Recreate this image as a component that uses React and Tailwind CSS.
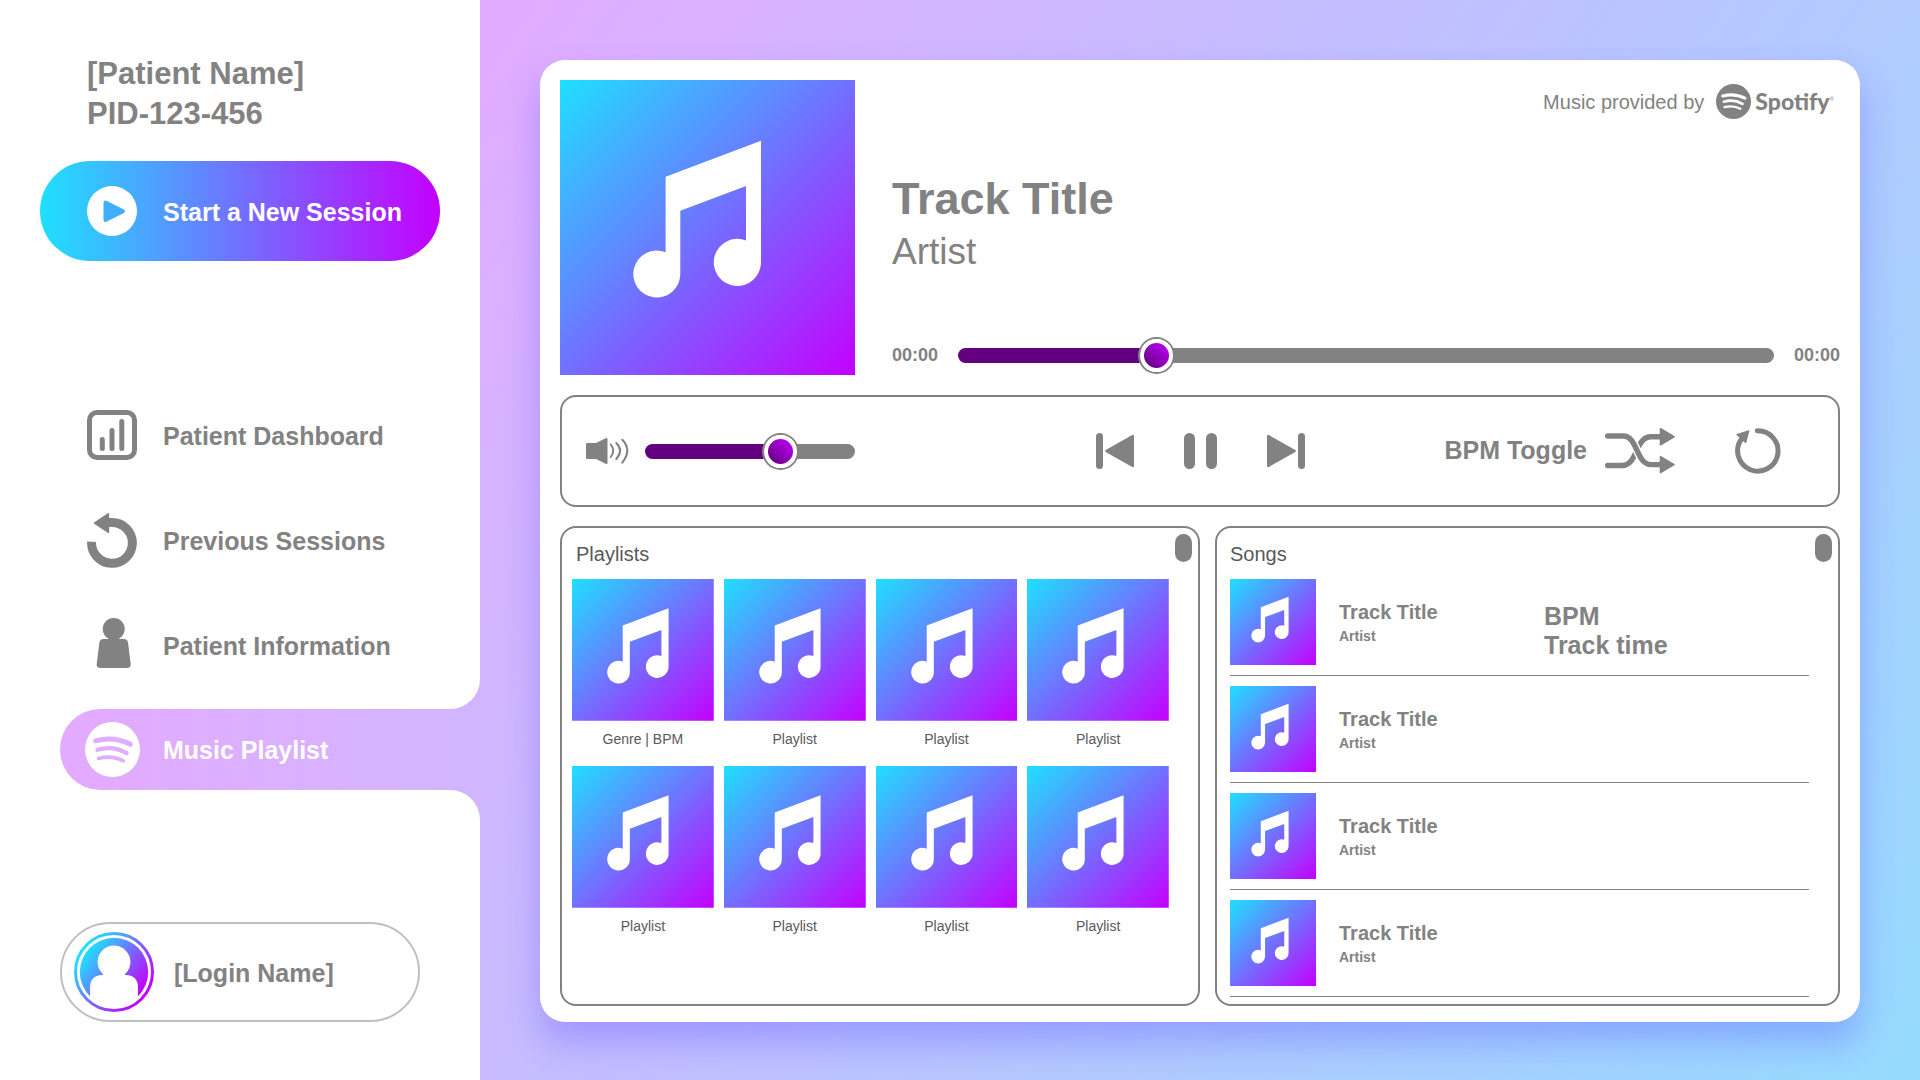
import { useState } from 'react';

const NAV_ITEMS = [
  { label: 'Patient Dashboard', href: '#dashboard', Icon: DashboardIcon },
  { label: 'Previous Sessions', href: '#sessions', Icon: HistoryIcon },
  { label: 'Patient Information', href: '#information', Icon: PersonIcon },
];

const PLAYLISTS = [
  { id: 1, name: 'Genre | BPM' },
  { id: 2, name: 'Playlist' },
  { id: 3, name: 'Playlist' },
  { id: 4, name: 'Playlist' },
  { id: 5, name: 'Playlist' },
  { id: 6, name: 'Playlist' },
  { id: 7, name: 'Playlist' },
  { id: 8, name: 'Playlist' },
];

const SONGS = [
  { id: 1, title: 'Track Title', artist: 'Artist', bpm: 'BPM', time: 'Track time' },
  { id: 2, title: 'Track Title', artist: 'Artist' },
  { id: 3, title: 'Track Title', artist: 'Artist' },
  { id: 4, title: 'Track Title', artist: 'Artist' },
];

function PlayIcon() {
  return (
    <svg className="h-[50px] w-[50px] shrink-0" viewBox="0 0 50 50">
      <circle cx="25" cy="25" r="25" fill="#fff" />
      <path
        d="M18.5 16.5v17.5l17.5-8.8z"
        fill="#42aefe"
        stroke="#42aefe"
        strokeWidth="4"
        strokeLinejoin="round"
      />
    </svg>
  );
}

function DashboardIcon() {
  return (
    <svg
      className="h-14 w-[50px] shrink-0"
      viewBox="0 0 50 56"
      fill="none"
      stroke="currentColor"
      strokeWidth="5"
      strokeLinecap="round"
    >
      <rect x="2.5" y="4.5" width="45" height="45" rx="7.5" />
      <path d="M15.3 31.5v9M25 22.5v18M34.8 13.5v27" />
    </svg>
  );
}

function HistoryIcon() {
  return (
    <svg className="h-14 w-[50px] shrink-0" viewBox="0 0 50 56">
      <path
        d="M4.6 28.8A20.4 20.4 0 1 0 25 9.5h-4"
        fill="none"
        stroke="currentColor"
        strokeWidth="9"
      />
      <path
        d="M7.5 10.1 21.5.7v18.8z"
        fill="currentColor"
        stroke="currentColor"
        strokeWidth="1.4"
        strokeLinejoin="round"
      />
    </svg>
  );
}

function PersonIcon() {
  return (
    <svg className="h-14 w-[50px] shrink-0" viewBox="0 0 50 56" fill="currentColor">
      <circle cx="26.7" cy="11" r="11" />
      <path d="M16.5 21h20.5q3.6 0 4 3.6l2.7 21.4q.3 4-3.7 4H13.5q-4.2 0-3.8-4l2.7-21.4q.4-3.6 4.1-3.6z" />
    </svg>
  );
}

function SpotifyIcon({ className, lineColor }) {
  return (
    <svg className={className} viewBox="0 0 55 55" fill="none" strokeLinecap="round">
      <circle cx="27.5" cy="27.5" r="27.5" fill="currentColor" />
      <path d="M10.6 18.8Q29 14 45.3 22.3" stroke={lineColor} strokeWidth="5" />
      <path d="M12.5 27.8Q28 23.2 41.6 31.2" stroke={lineColor} strokeWidth="4.3" />
      <path d="M13.5 36.4Q27 33 38.3 38.9" stroke={lineColor} strokeWidth="3.6" />
    </svg>
  );
}

function AvatarIcon() {
  return (
    <svg className="h-20 w-20 shrink-0" viewBox="0 0 80 80">
      <defs>
        <linearGradient id="avatar-fill" x1="0.1" y1="0.2" x2="0.9" y2="0.8">
          <stop offset="0" stopColor="#1fe0ff" />
          <stop offset="1" stopColor="#c400ff" />
        </linearGradient>
        <clipPath id="avatar-clip">
          <circle cx="40" cy="40" r="36" />
        </clipPath>
      </defs>
      <circle cx="40" cy="40" r="38.5" fill="none" stroke="url(#avatar-fill)" strokeWidth="3" />
      <circle cx="40" cy="40" r="34.2" fill="url(#avatar-fill)" />
      <g fill="#fff" clipPath="url(#avatar-clip)">
        <circle cx="40" cy="30" r="16.4" />
        <path d="M29 36h22v10H29z" />
        <path d="M16 80V56q0-12.5 12-13h24q12 .5 12 13v24z" />
      </g>
    </svg>
  );
}

function VolumeIcon() {
  return (
    <svg className="h-[26px] w-[43px] shrink-0" viewBox="0 0 43 26">
      <path
        d="M1 6h9.5l10-5v24l-10-5H1z"
        fill="currentColor"
        stroke="currentColor"
        strokeWidth="2"
        strokeLinejoin="round"
      />
      <path
        d="M24.8 6.5q4.8 6 0 12.5M30.3 5q7.6 7.5 0 16M36.3 1.8q10 10.2 0 22.8"
        fill="none"
        stroke="currentColor"
        strokeWidth="2"
        strokeLinecap="round"
      />
    </svg>
  );
}

function PreviousIcon() {
  return (
    <svg className="h-9 w-[38px]" viewBox="0 0 38 36" fill="currentColor">
      <rect width="7" height="36" rx="3.5" />
      <path
        d="M10.3 18 36.8 3v30z"
        stroke="currentColor"
        strokeWidth="2.4"
        strokeLinejoin="round"
      />
    </svg>
  );
}

function PauseIcon() {
  return (
    <svg className="h-9 w-[33px]" viewBox="0 0 33 36" fill="currentColor">
      <rect width="11" height="36" rx="5.5" />
      <rect x="22" width="11" height="36" rx="5.5" />
    </svg>
  );
}

function NextIcon() {
  return (
    <svg className="h-9 w-[38px]" viewBox="0 0 38 36" fill="currentColor">
      <rect x="31" width="7" height="36" rx="3.5" />
      <path
        d="M27.7 18 1.2 3v30z"
        stroke="currentColor"
        strokeWidth="2.4"
        strokeLinejoin="round"
      />
    </svg>
  );
}

function ShuffleIcon() {
  return (
    <svg className="h-[46px] w-[70px]" viewBox="0 0 70 46">
      <g fill="none" stroke="currentColor" strokeWidth="5.4" strokeLinecap="round">
        <path d="M2.7 37.5H17C33 37.5 30 8.7 46 8.7h9" />
        <path d="M18 8C33 8 31 36.6 46 36.6" stroke="#fff" strokeWidth="8.4" strokeLinecap="butt" />
        <path d="M2.7 8H18C33 8 31 36.6 46 36.6h9" />
      </g>
      <path
        d="M55.5.8 69 8.7 55.5 16.7zM55.5 28.6 69 36.6 55.5 44.6z"
        fill="currentColor"
        stroke="currentColor"
        strokeWidth="1.6"
        strokeLinejoin="round"
      />
    </svg>
  );
}

function RepeatIcon() {
  return (
    <svg className="h-[46px] w-[46px]" viewBox="0 0 46 46">
      <path
        d="M22.2 2.7A20.2 20.2 0 1 1 6.5 11"
        fill="none"
        stroke="currentColor"
        strokeWidth="5"
        strokeLinecap="round"
      />
      <path
        d="M2 6.6 13.8 2.8 10.7 14.6z"
        fill="currentColor"
        stroke="currentColor"
        strokeWidth="1.2"
        strokeLinejoin="round"
      />
    </svg>
  );
}

function CoverArt({ className }) {
  return (
    <svg className={className} viewBox="0 0 295 295">
      <defs>
        <linearGradient id="cover-fill" x1="0" y1="0" x2="1" y2="1">
          <stop offset="0" stopColor="#1fe0ff" />
          <stop offset="1" stopColor="#c400ff" />
        </linearGradient>
      </defs>
      <rect width="295" height="295" fill="url(#cover-fill)" />
      <path
        d="M105.6 96.7 201 60.7V182.3A23.6 23.6 0 1 1 186 160.4V106L120.3 130.7V194A23.5 23.5 0 1 1 105.6 172.2z"
        fill="#fff"
      />
    </svg>
  );
}

function RangeSlider({ label, value, onChange }) {
  // the fill stops under the middle of the 33px thumb
  const stop = `calc(${value}% + ${(0.5 - value / 100) * 33}px)`;

  return (
    <input
      type="range"
      aria-label={label}
      min="0"
      max="100"
      step="0.1"
      value={value}
      onChange={(e) => onChange(Number(e.target.value))}
      style={{ backgroundImage: `linear-gradient(to right, #62007f ${stop}, #828282 ${stop})` }}
      className="h-[15px] w-full min-w-0 cursor-pointer appearance-none rounded-full [&::-webkit-slider-thumb]:h-[33px] [&::-webkit-slider-thumb]:w-[33px] [&::-webkit-slider-thumb]:appearance-none [&::-webkit-slider-thumb]:rounded-full [&::-webkit-slider-thumb]:border-4 [&::-webkit-slider-thumb]:border-white [&::-webkit-slider-thumb]:bg-linear-to-tr/srgb [&::-webkit-slider-thumb]:from-[#5c0078] [&::-webkit-slider-thumb]:to-[#c400ff] [&::-webkit-slider-thumb]:shadow-[0_0_0_2px_#828282]"
    />
  );
}

function Panel({ title, children }) {
  return (
    <section className="flex items-start gap-1.5 rounded-2xl border-2 border-[#828282] p-1.5">
      <div className="min-w-0 flex-1 pt-1.5">
        {title}
        {children}
      </div>
      <div className="h-7 w-[17px] shrink-0 rounded-full bg-[#828282]" />
    </section>
  );
}

function Sidebar() {
  return (
    <aside className="flex w-[480px] shrink-0 flex-col bg-[#d1b5ff] text-[25px] font-bold">
      <div className="rounded-br-[30px] bg-white pb-[35px]">
        <div className="pt-[54px] pl-[87px] text-[31px] leading-10">
          <p>[Patient Name]</p>
          <p>PID-123-456</p>
        </div>

        <button
          type="button"
          className="mx-10 mt-[27px] flex h-[100px] w-[400px] items-center gap-[26px] rounded-full bg-linear-to-r/srgb from-[#1fe0ff] to-[#c400ff] pl-[47px] text-white"
        >
          <PlayIcon />
          <span className="pt-[3px]">Start a New Session</span>
        </button>

        <nav className="mt-[147px] flex flex-col gap-[49px] pl-[87px]">
          {NAV_ITEMS.map(({ label, href, Icon }) => (
            <a key={label} href={href} className="flex items-center gap-[26px]">
              <Icon />
              <span className="pt-0.5">{label}</span>
            </a>
          ))}
        </nav>
      </div>

      <div className="bg-linear-to-r from-white from-50% to-transparent to-50% pl-[60px]">
        <a
          href="#playlist"
          aria-current="page"
          className="flex h-[81px] items-center gap-[23px] rounded-l-full bg-linear-to-r/srgb from-[#e2abff] from-10% to-[#d1b5ff] pl-[25px] text-white"
        >
          <SpotifyIcon className="h-[55px] w-[55px] shrink-0" lineColor="#e0adff" />
          <span className="pt-[3px]">Music Playlist</span>
        </a>
      </div>

      <div className="flex-1 rounded-tr-[30px] bg-white px-[60px] pt-[132px] pb-[58px]">
        <button
          type="button"
          className="flex h-[100px] w-full items-center gap-5 rounded-full border-2 border-[#bfbfbf] pl-3"
        >
          <AvatarIcon />
          <span className="pt-[3px]">[Login Name]</span>
        </button>
      </div>
    </aside>
  );
}

function NowPlaying() {
  const [position, setPosition] = useState(23.3);

  return (
    <section className="flex gap-[37px]">
      <CoverArt className="h-[295px] w-[295px] shrink-0" />
      <div className="flex min-w-0 flex-1 flex-col">
        <div className="flex h-[43px] items-center justify-end pr-1.5 text-xl">
          Music provided by
          <SpotifyIcon className="mr-1 ml-3 h-[35px] w-[35px]" lineColor="#fff" />
          <span className="font-[Lato,sans-serif] text-[23px] font-black">Spotify</span>
          <sup className="text-[6px]">®</sup>
        </div>
        <h1 className="mt-[51px] text-[45px] leading-[50px] font-bold">Track Title</h1>
        <p className="mt-2 text-[37px] leading-10">Artist</p>
        <div className="mt-auto flex h-10 items-center gap-5 text-lg font-bold">
          <span>00:00</span>
          <RangeSlider label="Track position" value={position} onChange={setPosition} />
          <span>00:00</span>
        </div>
      </div>
    </section>
  );
}

function PlayerControls() {
  const [volume, setVolume] = useState(67);

  return (
    <section className="mt-5 grid h-28 grid-cols-[1fr_auto_1fr] items-center rounded-2xl border-2 border-[#828282]">
      <div className="flex items-center gap-4 pl-6">
        <VolumeIcon />
        <div className="flex w-[210px]">
          <RangeSlider label="Volume" value={volume} onChange={setVolume} />
        </div>
      </div>

      <div className="flex items-center gap-[50px]">
        <button type="button" aria-label="Previous">
          <PreviousIcon />
        </button>
        <button type="button" aria-label="Pause">
          <PauseIcon />
        </button>
        <button type="button" aria-label="Next">
          <NextIcon />
        </button>
      </div>

      <div className="flex items-center justify-end gap-[60px] pr-[57px]">
        <button type="button" className="flex items-center gap-[18px] text-[25px] font-bold">
          BPM Toggle
          <ShuffleIcon />
        </button>
        <button type="button" aria-label="Repeat">
          <RepeatIcon />
        </button>
      </div>
    </section>
  );
}

function Playlists() {
  return (
    <Panel title={<h2 className="pl-2 text-xl leading-7 text-[#58595b]">Playlists</h2>}>
      <ul className="mt-[11px] grid grid-cols-4 gap-x-2.5 gap-y-[17px] pl-1">
        {PLAYLISTS.map((playlist) => (
          <li key={playlist.id}>
            <a href="#playlist" className="block text-center text-sm text-[#58595b]">
              <CoverArt className="w-full" />
              <span className="mt-2 block">{playlist.name}</span>
            </a>
          </li>
        ))}
      </ul>
    </Panel>
  );
}

function Songs() {
  return (
    <Panel title={<h2 className="pl-[7px] text-xl leading-7 text-[#58595b]">Songs</h2>}>
      <ul className="mt-[11px] flex flex-col gap-2.5 pl-[7px]">
        {SONGS.map((song) => (
          <li key={song.id} className="flex border-b border-[#828282] pb-2.5 font-bold">
            <CoverArt className="h-[86px] w-[86px] shrink-0" />
            <div className="w-[228px] pt-[21px] pl-[23px]">
              <p className="text-xl leading-6">{song.title}</p>
              <p className="mt-0.5 text-sm">{song.artist}</p>
            </div>
            {song.bpm && (
              <div className="pt-[23px] text-[25px] leading-[29px]">
                <p>{song.bpm}</p>
                <p>{song.time}</p>
              </div>
            )}
          </li>
        ))}
      </ul>
    </Panel>
  );
}

export default function App() {
  return (
    <div className="flex min-h-screen bg-white font-['Liberation_Sans',Arial,sans-serif] text-[#828282]">
      <Sidebar />
      <main className="flex min-w-0 flex-1 flex-col bg-[linear-gradient(125deg,#e2abff,#96dbff)] px-[60px] pt-[60px] pb-[58px]">
        <div className="flex flex-1 flex-col rounded-[25px] bg-white px-5 pt-5 pb-4 shadow-[0_20px_35px_rgba(80,70,255,0.32)]">
          <NowPlaying />
          <PlayerControls />
          <div className="mt-[19px] grid flex-1 grid-cols-[640fr_625fr] gap-[15px]">
            <Playlists />
            <Songs />
          </div>
        </div>
      </main>
    </div>
  );
}
